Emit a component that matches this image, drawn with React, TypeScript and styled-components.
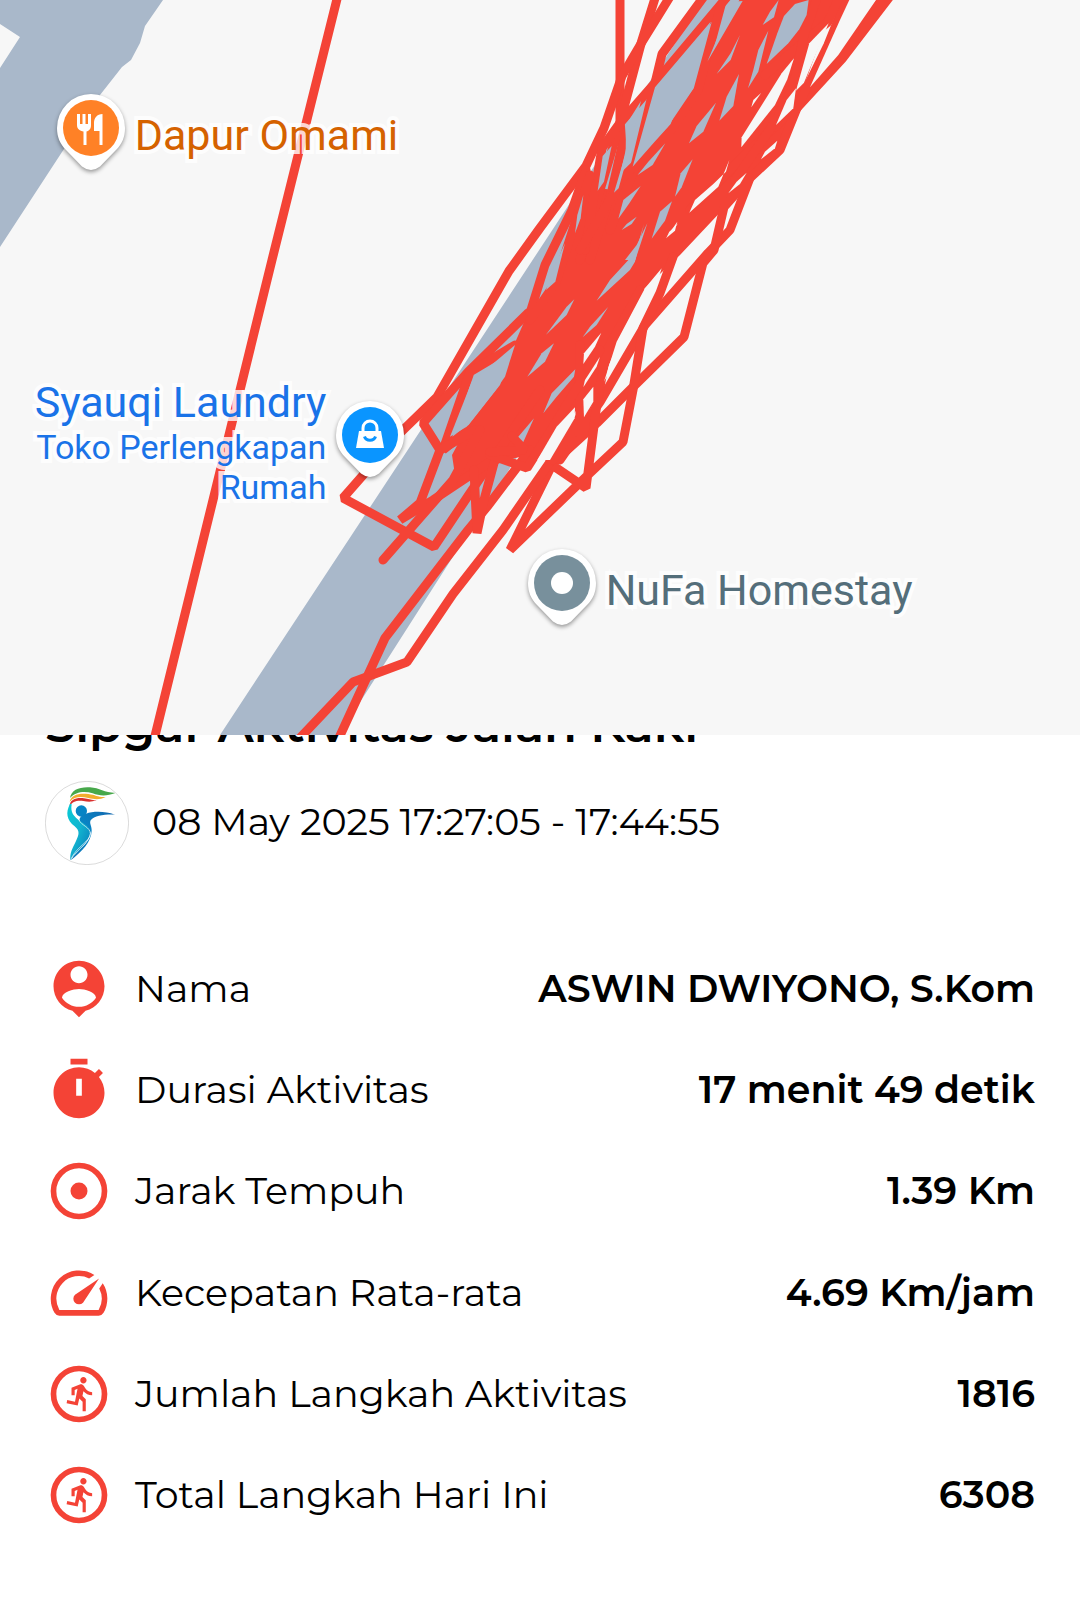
import React from "react";
import styled, { createGlobalStyle } from "styled-components";

const RED = "#f44336";
const ROAD = "#a9b8ca";
const LAND = "#f7f7f7";

const GlobalStyle = createGlobalStyle`
  body {
    margin: 0;
    background: #ffffff;
    color: #000000;
    font-family: Montserrat, Inter, "Liberation Sans", sans-serif;
  }
`;

const Page = styled.main`
  display: flex;
  flex-direction: column;
  background: #ffffff;
`;

const MapArea = styled.section`
  position: relative;
  z-index: 1;
  aspect-ratio: 1080 / 735;
  overflow: hidden;
  background: ${LAND};
`;

const MapDrawing = styled.svg`
  display: block;
  width: 100%;
  height: 100%;
`;

const Marker = styled.div<{ $top: number; $left?: number; $right?: number }>`
  position: absolute;
  top: ${(p) => p.$top}%;
  left: ${(p) => (p.$left === undefined ? "auto" : `${p.$left}%`)};
  right: ${(p) => (p.$right === undefined ? "auto" : `${p.$right}%`)};
  display: flex;
  flex-direction: ${(p) => (p.$right === undefined ? "row" : "row-reverse")};
  align-items: center;
  gap: 4px;
`;

const PinDrawing = styled.svg`
  flex: none;
  width: 80px;
  height: 90px;
  filter: drop-shadow(0 2px 2px rgba(0, 0, 0, 0.4));
`;

const PlaceText = styled.div<{ $color: string; $align?: string }>`
  display: flex;
  flex-direction: column;
  color: ${(p) => p.$color};
  font-family: Roboto, "Liberation Sans", sans-serif;
  text-align: ${(p) => p.$align ?? "left"};
  white-space: nowrap;
  paint-order: stroke fill;
  -webkit-text-stroke: 8px rgba(255, 255, 255, 0.8);
`;

const PlaceName = styled.span`
  font-size: 43px;
  line-height: 50px;
`;

const PlaceKind = styled.span`
  font-size: 34px;
  line-height: 40px;
`;

const Details = styled.section`
  display: flex;
  flex-direction: column;
  padding: 0 45px 62px;
`;

const Title = styled.h1`
  margin: -38px 0 28px;
  font-size: 48px;
  line-height: 56px;
  font-weight: 600;
`;

const Session = styled.div`
  display: flex;
  align-items: center;
  gap: 23px;
  margin-bottom: 73px;
`;

const Avatar = styled.svg`
  flex: none;
  width: 84px;
  height: 84px;
`;

const SessionTime = styled.time`
  font-size: 38px;
  line-height: 48px;
  padding-bottom: 2px;
`;

const StatList = styled.dl`
  display: grid;
  grid-auto-rows: 1fr;
  height: 608px;
  margin: 0;
`;

const StatRow = styled.div`
  display: flex;
  align-items: center;
`;

const StatIcon = styled.svg`
  flex: none;
  width: 68px;
  height: 68px;
  margin-right: 22px;
  fill: ${RED};
`;

const StatLabel = styled.dt`
  flex: 1;
  font-size: 38px;
  line-height: 48px;
  font-weight: 400;
`;

const StatValue = styled.dd`
  margin: 0;
  font-size: 38px;
  line-height: 48px;
  font-weight: 600;
  text-align: right;
`;

/* ---- route drawing ---- */

const routes = [
  "M338,-5 L272,260 L154,740",
  "M620,-5 L620,120 L622,146 L612,190 L590,260",
  "M656,-5 L642,40 L630,85 L618,130 L600,190 L580,260",
  "M671,-5 L642,42 L622,76 L604,128 L586,166 L540,228 L509,271 L437,397 L400,433 L343,498 L434,547 L470,493 L540,390",
  "M705,-5 L662,54 L655,83 L634,170 L610,230",
  "M727,-3 L655,83 L620,123 L602,148 L595,190 L585,250",
  "M721,5 L698,90 L671,130 L624,176 L580,250",
  "M885,-5 L840,55 L797,106 L750,150 L690,210",
  "M891,-5 L842,59 L797,108",
  "M848,-5 L828,45 L797,108 L780,150 L750,178 L730,230 L708,253 L645,325 L600,402 L560,460",
  "M840,-5 L828,22 L806,40 L765,75",
  "M818,-5 L804,35 L793,88 L775,122 L735,180",
  "M750,178 L724,207 L714,250 L703,263 L684,337 L632,388 L597,423 L553,463",
  "M673,257 L660,293 L643,328 L633,390 L623,442 L590,473 L510,550 L552,465 L586,488 L597,403 L607,350 L640,290",
  "M580,345 L580,417 L550,460",
  "M550,462 L503,530 L453,594 L407,662 L353,682 L298,740",
  "M600,385 L553,460",
  "M530,450 L487,507 L468,530 L385,638 L338,740",
  "M528,313 L468,372 L423,423 L440,450 L420,503 L400,520 L433,500 L493,460",
  "M515,345 L470,372 L443,450 L468,430",
  "M475,430 L440,450",
  "M383,560 L453,480 L480,430",
  "M474,470 L477,533 L484,500 L494,463",
  "M490,455 L527,468 L553,427 L600,350",
  "M490,452 L525,450 L512,436",
  "M586,170 L572,210 L545,265 L530,313",
  "M590,175 L576,220 L556,282 L530,320",
];

const trackMass =
  "M742,-5 L842,-5 L826,25 L797,105 L780,150 L752,180 L727,205 L680,255 L643,290 L620,340 L600,385 L575,412 L550,450 L530,455 L505,460 L470,480 L430,505 L455,475 L452,455 L467,427 L500,385 L514,345 L528,313 L556,282 L576,205 L588,168 L600,188 L612,190 L622,180 L660,145 L680,112 L695,90 L710,55 Z";

/* Gaps left between the tracks, in thirds of a map unit. */
const upperRoadGaps = [
  "M716,0 L690,35 L668,75 L702,52 Z",
  "M765,12 L806,0 L800,45 L778,88 L745,130 L680,192 L712,100 L732,48 Z",
  "M685,92 L655,150 L640,210 L624,265 L655,215 Z",
  "M600,105 L572,160 L530,222 L572,180 Z",
  "M597,222 L560,290 L538,362 L580,318 Z",
  "M528,308 L470,378 L447,430 L490,395 Z",
  "M458,478 L422,520 L405,590 L425,562 Z",
  "M396,604 L360,635 L335,716 L375,662 Z",
  "M302,558 L250,600 L235,656 L268,610 Z",
  "M376,430 L325,485 L293,525 L338,495 Z",
  "M322,670 L290,735 L255,780 L286,780 Z",
  "M290,650 L260,672 L245,690 L275,672 Z",
  "M512,65 L345,262 L278,500 L340,430 L392,372 L402,345 L458,268 L472,200 Z",
  "M572,5 L548,75 L502,185 L608,3 Z",
  "M215,438 L188,468 L173,572 L192,545 Z",
  "M303,303 L258,375 L257,460 L222,578 L236,565 L262,470 Z",
  "M130,585 L112,645 L105,700 L122,655 Z",
];
const upperLandGaps = [
  "M762,175 L725,220 L605,412 L604,442 L705,315 L742,238 Z",
  "M768,265 L740,300 L708,375 L760,325 Z",
  "M866,70 L808,130 L768,272 L792,248 Z",
  "M928,0 L900,60 L810,262 L895,165 L1008,0 Z",
  "M568,480 L558,515 L520,552 L465,600 L448,638 L535,560 Z",
  "M712,422 L675,455 L663,478 L705,445 Z",
  "M664,278 L640,300 L634,322 Z",
  "M412,665 L378,715 L405,692 Z",
  "M620,518 L590,545 L565,580 L600,552 Z",
];
const lowerRoadGaps = [
  "M495,130 L460,205 L438,270 L466,245 Z",
  "M523,298 L500,320 L438,404 L500,345 Z",
  "M462,430 L425,460 L382,530 L435,485 Z",
  "M526,508 L455,580 L430,640 L470,590 L522,530 Z",
  "M402,655 L355,710 L370,726 Z",
  "M732,72 L715,130 L690,175 L630,240 L590,302 L690,210 L705,185 Z",
  "M625,320 L570,380 L548,412 L590,375 Z",
  "M345,435 L215,545 L150,710 L200,680 L285,572 L315,530 Z",
];
const lowerLandGaps = [
  "M604,398 L552,460 L550,492 L585,440 Z",
  "M600,470 L555,540 L550,562 L590,500 Z",
  "M580,560 L550,598 L552,652 L580,605 Z",
  "M525,622 L470,680 L412,780 L450,780 L524,655 Z",
  "M835,70 L808,95 L800,112 Z",
  "M785,205 L735,265 L650,425 L612,545 L705,375 L765,270 Z",
];

const outline = (paths: string[], fill: string) =>
  paths.map((d) => <path key={d} d={d} fill={fill} />);

const RouteMap = () => (
  <MapDrawing viewBox="0 0 1080 735" preserveAspectRatio="xMidYMid slice" aria-hidden="true">
    <rect width="1080" height="735" fill={LAND} />
    <g fill={ROAD}>
      <path d="M0,0 L163,0 L145,26 L140,43 L131,60 L122,67 L100,95 L62,152 L0,247 V68 L20,37 L0,24 Z" />
      <path d="M220,735 L355,530 L467,360 L572,200 L654,75 L704,0 L810,0 Q800,32 787,50 L700,176 L580,360 L470,530 L339,735 Z" />
    </g>
    <path d={trackMass} fill={RED} />
    <g fill="none" stroke={RED} strokeWidth="9" strokeLinejoin="bevel" strokeLinecap="round">
      {routes.map((d) => (
        <path key={d} d={d} />
      ))}
    </g>
    <g transform="translate(540 0) scale(0.3333)">
      {outline(upperRoadGaps, ROAD)}
      {outline(upperLandGaps, LAND)}
    </g>
    <g transform="translate(400 200) scale(0.3333)">
      {outline(lowerRoadGaps, ROAD)}
      {outline(lowerLandGaps, LAND)}
    </g>
  </MapDrawing>
);

const Pin = ({ color, children }: { color: string; children: React.ReactNode }) => (
  <PinDrawing viewBox="0 0 80 90" aria-hidden="true">
    <path
      fill="#ffffff"
      d="M40 4a34 34 0 0 1 34 34c0 9-3 16-9 22L49 76.500q-9 7-18 0L15 60C9 54 6 47 6 38A34 34 0 0 1 40 4z"
    />
    <circle cx="40" cy="38" r="28" fill={color} />
    {children}
  </PinDrawing>
);

const FoodGlyph = () => (
  <path
    fill="#ffffff"
    d="M26 24h3v10h2.500V24h3v10H37V24h3v11c0 4-2 6-4.500 6.500V55h-3V41.500C29 41 26 39 26 35zM51.500 24v31h-3V41H43v-8c0-5 3-9 8.500-9z"
  />
);

const BagGlyph = () => (
  <g fill="none" stroke="#ffffff">
    <path d="M29 34h22l3 17H26z" fill="#ffffff" stroke="none" />
    <path d="M33 35v-4a7 7 0 0 1 14 0v4" strokeWidth="3" />
    <path d="M34.500 39.500c1.500 5 9.500 5 11 0" stroke="#0a95ff" strokeWidth="3" />
  </g>
);

/* ---- stat icons, 24-unit grid ---- */

const Runner = () => (
  <>
    <circle cx="12" cy="12" r="9" fill="none" stroke={RED} strokeWidth="2" />
    <path
      transform="translate(6 5.200) scale(0.56)"
      d="M13.490 5.480c1.100 0 2-.9 2-2s-.9-2-2-2-2 .9-2 2 .9 2 2 2zm-3.600 13.900l1-4.400 2.100 2v6h2v-7.500l-2.100-2 .6-3c1.300 1.500 3.300 2.500 5.500 2.500v-2c-1.900 0-3.500-1-4.300-2.400l-1-1.600c-.4-.6-1-1-1.700-1-.3 0-.5.1-.8.1l-5.200 2.200v4.700h2v-3.400l1.800-.7-1.600 8.100-4.900-1-.4 2 7 1.400z"
    />
  </>
);

const icons = {
  person: (
    <path d="M12 2C7.030 2 3 6.030 3 11c0 4.170 2.830 7.670 6.690 8.690L12 22l2.310-2.310C18.170 18.670 21 15.170 21 11c0-4.970-4.030-9-9-9zm0 2c1.660 0 3 1.340 3 3s-1.340 3-3 3-3-1.340-3-3 1.340-3 3-3zm0 14.300c-2.500 0-4.710-1.280-6-3.220.03-1.990 4-3.080 6-3.080s5.970 1.090 6 3.080c-1.290 1.940-3.500 3.220-6 3.220z" />
  ),
  timer: (
    <path
      fillRule="evenodd"
      d="M15 -1H9v2h6zM11 12h2V6h-2zM19.030 5.390l1.420-1.420c-.43-.51-.9-.99-1.410-1.410l-1.420 1.420C16.070 2.740 14.120 2 12 2c-4.970 0-9 4.030-9 9s4.020 9 9 9 9-4.030 9-9c0-2.120-.74-4.070-1.970-5.610z"
      transform="translate(0 2)"
    />
  ),
  distance: (
    <>
      <circle cx="12" cy="12" r="9" fill="none" stroke={RED} strokeWidth="2" />
      <circle cx="12" cy="12" r="3" />
    </>
  ),
  speed: (
    <path d="M20.380 8.570l-1.230 1.850a8 8 0 0 1-.22 7.580H5.070A8 8 0 0 1 15.580 6.850l1.850-1.230A10 10 0 0 0 3.350 19a2 2 0 0 0 1.720 1h13.850a2 2 0 0 0 1.740-1 10 10 0 0 0-.27-10.440zM10.590 15.410a2 2 0 0 0 2.830 0l5.660-8.490-8.490 5.660a2 2 0 0 0 0 2.830z" />
  ),
  steps: <Runner />,
};

const stats: { icon: keyof typeof icons; label: string; value: string }[] = [
  { icon: "person", label: "Nama", value: "ASWIN DWIYONO, S.Kom" },
  { icon: "timer", label: "Durasi Aktivitas", value: "17 menit 49 detik" },
  { icon: "distance", label: "Jarak Tempuh", value: "1.39 Km" },
  { icon: "speed", label: "Kecepatan Rata-rata", value: "4.69 Km/jam" },
  { icon: "steps", label: "Jumlah Langkah Aktivitas", value: "1816" },
  { icon: "steps", label: "Total Langkah Hari Ini", value: "6308" },
];

const Logo = () => (
  <Avatar viewBox="15 14 252 252" role="img" aria-label="Sipgar">
    <defs>
      <linearGradient id="body" x1="0" y1="0" x2="1" y2="1">
        <stop offset="0" stopColor="#08cbd6" />
        <stop offset="0.500" stopColor="#12b3cf" />
        <stop offset="1" stopColor="#0873b8" />
      </linearGradient>
      <linearGradient id="arm" x1="1" y1="0" x2="0" y2="1">
        <stop offset="0" stopColor="#1467ae" />
        <stop offset="0.500" stopColor="#0786c6" />
        <stop offset="1" stopColor="#0d73b6" />
      </linearGradient>
    </defs>
    <circle cx="141" cy="140" r="125" fill="#ffffff" stroke="#c9c9c9" strokeWidth="2" />
    <path d="M90 65C94 41 118 31 150 33c29 2 43 16 76 17-25 10-47 9-68 1-25-8-51-5-68 14z" fill="#47a84b" />
    <path d="M89 76c4-20 28-27 56-23 22 3 31 11 52 9-20 10-36 6-52 3-24-5-42-4-56 11z" fill="#f2ad2e" />
    <path d="M89 90c0-20 20-27 43-24 16 2 22 7 38 5-16 7-27 5-40 3-20-2-33 1-41 16z" fill="#d9302f" />
    <circle cx="124" cy="104" r="17" fill="#0784c5" />
    <path d="M225 115C195 104 160 104 138 112c-16 6-22 14-18 24 14 12 28 20 32 34-2 30-36 46-60 82 34-26 62-56 63-88 1-14-8-22-3-32 12-15 42-18 73-17z" fill="url(#arm)" />
    <path d="M90 82c-14 28-10 48 14 68 16 14 14 24 3 46-10 20-18 34-16 56 12-24 46-44 58-74 6-18-6-30-26-42-24-16-32-28-28-52z" fill="url(#body)" />
    <path d="M117 131c7 17 34 21 34 41-1 24-38 36-57 74" fill="none" stroke="#ffffff" strokeWidth="2" />
  </Avatar>
);

export default function App() {
  return (
    <>
      <GlobalStyle />
      <Page>
        <MapArea aria-label="Rute aktivitas">
          <RouteMap />
          <Marker $top={12.2} $left={4.7}>
            <Pin color="#ff8126">
              <FoodGlyph />
            </Pin>
            <PlaceText $color="#d56200">
              <PlaceName>Dapur Omami</PlaceName>
            </PlaceText>
          </Marker>
          <Marker $top={51.3} $right={62}>
            <Pin color="#0a95ff">
              <BagGlyph />
            </Pin>
            <PlaceText $color="#1a73e8" $align="right">
              <PlaceName>Syauqi Laundry</PlaceName>
              <PlaceKind>Toko Perlengkapan</PlaceKind>
              <PlaceKind>Rumah</PlaceKind>
            </PlaceText>
          </Marker>
          <Marker $top={74.2} $left={48.3}>
            <Pin color="#78909c">
              <circle cx="40" cy="38" r="11" fill="#ffffff" />
            </Pin>
            <PlaceText $color="#546e7a">
              <PlaceName>NuFa Homestay</PlaceName>
            </PlaceText>
          </Marker>
        </MapArea>
        <Details>
          <Title>Sipgar Aktivitas Jalan Kaki</Title>
          <Session>
            <Logo />
            <SessionTime>08 May 2025 17:27:05 - 17:44:55</SessionTime>
          </Session>
          <StatList>
            {stats.map((s) => (
              <StatRow key={s.label}>
                <StatIcon viewBox="0 0 24 24" aria-hidden="true">
                  {icons[s.icon]}
                </StatIcon>
                <StatLabel>{s.label}</StatLabel>
                <StatValue>{s.value}</StatValue>
              </StatRow>
            ))}
          </StatList>
        </Details>
      </Page>
    </>
  );
}
